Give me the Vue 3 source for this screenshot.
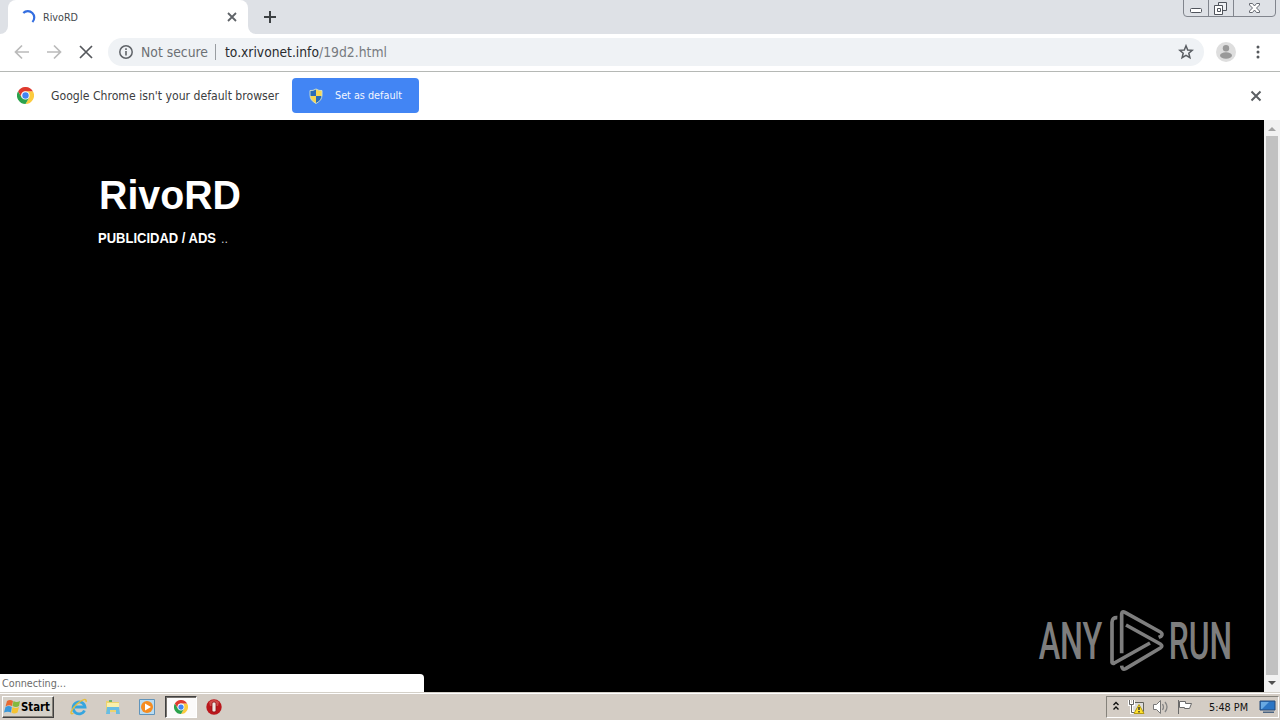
<script setup>
import { h } from 'vue'

// Single line of text fitted to an exact width
const Label = (p) =>
  h('svg', { width: p.w, height: 20, class: 'label', style: { display: 'block', overflow: 'visible', flex: 'none' } }, [
    h('text', {
      x: 0, y: 14, 'font-size': p.s || 11, fill: p.c || '#333', 'font-weight': p.b ? 700 : 400,
      'font-family': p.f || '"DejaVu Sans Condensed", "DejaVu Sans", sans-serif',
      textLength: p.w, lengthAdjust: 'spacingAndGlyphs'
    }, p.t)
  ])
Label.props = ['t', 'w', 's', 'c', 'b', 'f']

const Chrome = (p) =>
  h('svg', { width: p.size, height: p.size, viewBox: '0 0 24 24', style: { display: 'block', flex: 'none' } }, [
    h('path', { d: 'M12 12V6H22.4A12 12 0 0 1 12 24L17.2 15Z', fill: '#fccb3e' }),
    h('path', { d: 'M12 12 17.2 15 12 24A12 12 0 0 1 1.6 6L6.8 15Z', fill: '#2ba24c' }),
    h('path', { d: 'M1.6 6A12 12 0 0 1 22.4 6H12A6 6 0 0 0 6.8 15Z', fill: '#df3a2e' }),
    h('circle', { cx: 12, cy: 12, r: 5.8, fill: '#fff' }),
    h('circle', { cx: 12, cy: 12, r: 4.5, fill: '#4285f4' })
  ])
Chrome.props = ['size']
</script>

<template>
  <div class="screen">
    <header class="tabs">
      <div class="edge"></div>
      <div class="tab">
        <svg class="spinner" width="16" height="16" viewBox="0 0 16 16"><path d="M2.3 4.1A6 6 0 1 1 11.4 13.1" fill="none" stroke="#326de0" stroke-width="2.2"/></svg>
        <Label t="RivoRD" :w="35" :s="11" c="#45484c" />
        <svg class="tabclose" width="10" height="10" viewBox="0 0 10 10"><path d="M1 1 9 9M9 1 1 9" stroke="#5f6368" stroke-width="1.8"/></svg>
      </div>
      <div class="strip">
        <svg width="12" height="12" viewBox="0 0 12 12"><path d="M6 0V12M0 6H12" stroke="#3c4043" stroke-width="2"/></svg>
      </div>
      <svg class="wincontrols" width="97" height="18" viewBox="0 0 97 18" fill="none">
        <path d="M.5 0V13Q.5 16.5 4 16.5H89Q92.5 16.5 92.5 13V0M25.500 0V16M50.500 0V16" stroke="#81858d"/>
        <rect x="7.500" y="8.500" width="11" height="4" rx="1" fill="#fff" stroke="#50545c"/>
        <path d="M35.500 2.500H43.500V10.500H35.500Z" fill="#eef0f3" stroke="#50545c"/>
        <path d="M31.500 5.500H39.500V14.500H31.500ZM34.500 8.500H37.500V11.500H34.500Z" fill="#fff" stroke="#50545c"/>
        <path d="M66.500 3.500H69.500L71.500 6 73.500 3.500H76.500V5L73.500 8 76.500 11V12.500H73.500L71.500 10 69.500 12.500H66.500V11L69.500 8 66.500 5Z" fill="#fff" stroke="#656971"/>
      </svg>
    </header>

    <nav class="toolbar">
      <svg class="navicons" width="108" height="36" viewBox="0 0 108 36" fill="none" stroke-width="1.7">
        <path d="M29 18H16M22 11.500 15.500 18 22 24.500M47 18H60M54 11.500 60.500 18 54 24.500" stroke="#bababa"/>
        <path d="M80 12 92 24M92 12 80 24" stroke="#55585c"/>
      </svg>
      <div class="address">
        <svg width="14" height="14" viewBox="0 0 14 14" fill="none"><circle cx="7" cy="7" r="6.200" stroke="#5f6368" stroke-width="1.500"/><path d="M7 6V10.600M7 3.300V4.900" stroke="#5f6368" stroke-width="1.600"/></svg>
        <Label class="url secure" t="Not secure" :w="67" :s="14" c="#6c7074" />
        <i class="divider"></i>
        <Label class="url" t="to.xrivonet.info" :w="94" :s="14" c="#292b2e" />
        <Label class="url" t="/19d2.html" :w="68" :s="14" c="#777b80" />
        <svg class="star" width="16" height="16" viewBox="0 0 16 16"><path d="M8 1.800 9.700 6 14.200 6.300 10.800 9.200 11.900 13.700 8 11.300 4.100 13.700 5.200 9.200 1.800 6.300 6.300 6Z" fill="none" stroke="#5a5e63" stroke-width="1.500"/></svg>
      </div>
      <svg class="avatar" width="20" height="20" viewBox="0 0 20 20"><circle cx="10" cy="10" r="10" fill="#dedede"/><circle cx="10" cy="6.200" r="3.200" fill="#999"/><ellipse cx="10" cy="13.500" rx="6" ry="3.200" fill="#999"/></svg>
      <svg width="4" height="14" viewBox="0 0 4 14" fill="#55585c"><circle cx="2" cy="2" r="1.500"/><circle cx="2" cy="7" r="1.500"/><circle cx="2" cy="12" r="1.500"/></svg>
    </nav>

    <section class="infobar">
      <Chrome :size="17" />
      <Label class="question" t="Google Chrome isn't your default browser" :w="228" :s="12.5" c="#3c3d40" />
      <button class="default">
        <svg width="14" height="16" viewBox="0 0 14 16"><path d="M7 1Q10 3 13 2.500V7Q13 12.500 7 15.500 1 12.500 1 7V2.500Q4 3 7 1Z" fill="#2a6cb8"/><path d="M7 1V8H13V2.500Q10 3 7 1ZM7 8H1Q1.500 12.800 7 15.500Z" fill="#f5d654"/><path d="M7 1Q10 3 13 2.500V7Q13 12.500 7 15.500 1 12.500 1 7V2.500Q4 3 7 1Z" fill="none" stroke="#d6e4c9" stroke-width=".9"/></svg>
        <Label class="setlabel" t="Set as default" :w="67" :s="11" c="#f2f6ff" />
      </button>
      <svg class="dismiss" width="12" height="12" viewBox="0 0 12 12"><path d="M1.500 1.500 10.500 10.500M10.500 1.500 1.500 10.500" stroke="#5b5f63" stroke-width="2"/></svg>
    </section>

    <main class="viewport">
      <article class="page">
        <Label class="title" t="RivoRD" :w="142" :s="41" b="1" c="#fff" f="'Liberation Sans', sans-serif" />
        <div class="ads">
          <Label t="PUBLICIDAD / ADS" :w="118" :s="14" b="1" c="#fff" f="'Liberation Sans', sans-serif" />
          <Label t=".." :w="7" :s="13" c="#ccc" f="'Liberation Sans', sans-serif" />
        </div>
      </article>
      <aside class="scroll">
        <svg width="16" height="16" viewBox="0 0 16 16"><path d="M4 11 8 7 12 11Z" fill="#a3a3a3"/></svg>
        <div class="thumb"></div>
        <svg width="16" height="17" viewBox="0 0 16 17"><path d="M4 6 8 10 12 6Z" fill="#505050"/></svg>
      </aside>
      <svg class="watermark" width="230" height="80" viewBox="0 0 690 240">
        <g fill="#7e7e7e" font-family="Roboto, sans-serif" font-size="154" font-weight="500">
          <text x="26" y="178" textLength="191" lengthAdjust="spacingAndGlyphs">ANY</text>
          <text x="416" y="178" textLength="190" lengthAdjust="spacingAndGlyphs">RUN</text>
        </g>
        <g fill="none" stroke="#7e7e7e" stroke-width="11" stroke-linejoin="round">
          <path d="M262 53Q246 52 246 67V187Q247 192 253 189L360 129"/>
          <path d="M275 160V42Q276 32 285 37L391 96Q400 101 393 109L386 112"/>
          <path d="M288 75 391 132Q400 138 391 144L287 206Q276 211 275 197"/>
        </g>
      </svg>
      <div class="status"><Label t="Connecting..." :w="64" :s="11" c="#6c6c6c" /></div>
    </main>

    <footer class="taskbar">
      <button class="start">
        <svg width="17" height="16" viewBox="0 0 17 16"><path d="M3 2Q6 0 9 2L8 7Q5 5.500 1.500 7.500Z" fill="#e76a31"/><path d="M9.500 2Q12.500 4 16 2L15 7Q12 9 8.500 7Z" fill="#83b93e"/><path d="M1.500 8Q4.500 6 7.800 8L7 13.500Q4 12 0 13.500Z" fill="#3a98da"/><path d="M8.500 8Q11.500 10 15 8L13.500 13.500Q10 15.500 7.500 13.500Z" fill="#f5c332"/></svg>
        <Label t="Start" :w="29" :s="11.5" b="1" c="#000" />
      </button>
      <div class="launch">
        <svg width="18" height="18" viewBox="0 0 18 18" fill="none"><path d="M14.500 12.500A6 6 0 1 1 15 9H5" stroke="#35a5df" stroke-width="2.800"/><path d="M3.500 15C-1 18 1 11 7 6S17 0 16 4" stroke="#e5be3c" stroke-width="1.500"/></svg>
        <svg width="18" height="18" viewBox="0 0 18 18"><path d="M2 3H7L8 4H15V14H2Z" fill="#ecd36e"/><path d="M3 5H15V11H3Z" fill="#faf0ab"/><path d="M3 9H15L16 16H12V12H6V16H2Z" fill="#68bde3"/><path d="M5 3H8" stroke="#48a85d" stroke-width="1.500"/></svg>
        <svg width="18" height="18" viewBox="0 0 18 18"><path d="M1.500 1.500H16.500V16.500H1.500Z" fill="#b9dcf2" stroke="#6094bb"/><circle cx="9" cy="9" r="6" fill="#f58c20"/><path d="M7 5.500 13 9 7 12.500Z" fill="#fff"/></svg>
      </div>
      <div class="active"><Chrome :size="14" /></div>
      <svg class="opera" width="16" height="16" viewBox="0 0 16 16"><circle cx="8" cy="8" r="7.700" fill="#ba171c"/><path d="M3 3Q8-1 13 3L12 7H4Z" fill="#d04a48"/><rect x="6" y="3" width="4" height="10" rx="1.800" fill="#eee5df" stroke="#8c1014" stroke-width=".8"/></svg>
      <div class="tray">
        <svg class="chevrons" width="8" height="10" viewBox="0 0 8 10" fill="none"><path d="M1.500 4 4 1.500 6.500 4M1.500 8.500 4 6 6.500 8.500" stroke="#111" stroke-width="1.400"/></svg>
        <svg width="18" height="16" viewBox="0 0 18 16"><path d="M4.500 3.500H15.500V12.500H4.500Z" fill="#ddd" stroke="#62625b"/><path d="M1.500 1V5.500H5.500V1M3.500 5.500V13.500H9" fill="none" stroke="#fff" stroke-width="3"/><path d="M1.500 1V5.500H5.500V1M3.500 5.500V13.500H9" fill="none" stroke="#666" stroke-width="1"/><path d="M11 5.500 16 14.500H6Z" fill="#ffe12d" stroke="#b49a13"/><path d="M11 8V11M11 12V13.500" stroke="#333" stroke-width="1.500"/></svg>
        <svg width="18" height="16" viewBox="0 0 18 16"><path d="M1.500 5.500H4.500L8.500 1.500V14.500L4.500 10.500H1.500Z" fill="#fff" stroke="#777"/><path d="M10.500 5Q12.500 8 10.500 11M13 3Q17 8 13 13" fill="none" stroke="#858585" stroke-width="1.300"/></svg>
        <svg width="18" height="16" viewBox="0 0 18 16"><path d="M2.500 1V15M3.500 2.500H9.500V4.500H15.500L13.500 9.500H8.500V8.500H3.500Z" fill="#fff" stroke="#6a6a6a"/></svg>
        <Label class="clock" t="5:48 PM" :w="39" :s="11" c="#111" />
        <svg class="desktop" width="17" height="14" viewBox="0 0 17 14"><path d="M1 1H16V10H1Z" fill="#2c75c4" stroke="#264a78"/><path d="M2 2H10L3 9H2Z" fill="#69a9e2"/><path d="M4 11.500H15V13H4Z" fill="#4b6482"/></svg>
      </div>
    </footer>
  </div>
</template>

<style scoped>
.screen { width: 1280px; height: 720px; overflow: hidden; display: flex; flex-direction: column; background: #fff; }
button { border: 0; margin: 0; padding: 0; }
.tabs { position: relative; height: 34px; display: flex; background: linear-gradient(#dee1e6 20px, #fff 20px); flex: none; }
.edge { width: 8px; background: #dee1e6; border-radius: 0 0 8px 0; }
.tab { width: 240px; box-sizing: border-box; padding: 0 11px 1px 13px; display: flex; align-items: center; background: #fff; border-radius: 8px 8px 0 0; }
.spinner { margin-right: 6px; }
.tabclose { margin-left: auto; }
.strip { flex: 1; padding-left: 16px; display: flex; align-items: center; background: #dee1e6; border-radius: 0 0 0 8px; }
.wincontrols { position: absolute; right: 0; top: 0; }
.toolbar { height: 36px; padding-bottom: 1px; flex: none; display: flex; align-items: center; border-bottom: 1px solid #b5b8b5; }
.navicons { flex: none; }
.address { width: 1096px; height: 28px; border-radius: 14px; background: #eff2f5; box-sizing: border-box; padding: 0 10px 0 11px; display: flex; align-items: center; }
.url { margin-top: 2px; }
.secure { margin-left: 8px; }
.divider { width: 1px; height: 16px; background: #999da1; margin: 0 9px 0 7px; }
.star { margin-left: auto; }
.avatar { margin: 0 20px 0 12px; }
.infobar { height: 47px; padding: 0 18px 1px 17px; flex: none; display: flex; align-items: center; }
.question { margin-left: 17px; }
.default { width: 127px; height: 35px; margin-left: 13px; border-radius: 4px; background: #4285f4; display: flex; align-items: center; padding-left: 17px; gap: 12px; }
.setlabel { margin-bottom: 2px; }
.dismiss { margin-left: auto; }
.viewport { height: 572px; flex: none; background: #000; position: relative; display: flex; }
.page { flex: 1; padding: 75px 0 0 98px; }
.title { margin-left: 1px; }
.ads { display: flex; gap: 5px; margin-top: 14px; }
.scroll { width: 16px; background: #f1f1f1; display: flex; flex-direction: column; align-items: center; }
.scroll svg { display: block; flex: none; }
.thumb { width: 12px; flex: 1; background: #c1c1c1; }
.watermark { position: absolute; left: 1030px; top: 480px; overflow: visible; }
.status { position: absolute; left: 0; bottom: 0; width: 424px; height: 18px; background: #fff; border-top-right-radius: 4px; padding-left: 2px; box-sizing: border-box; display: flex; align-items: center; }
.taskbar { height: 28px; flex: none; box-sizing: border-box; border-top: 1px solid #d4d0c8; box-shadow: inset 0 1px #fff; background: #d4cdc5; display: flex; align-items: center; padding: 1px 1px 0 2px; }
.start { width: 52px; height: 22px; box-sizing: border-box; display: flex; align-items: center; padding-left: 1px; background: #d4d0c8; border: 1px solid; border-color: #fff #404040 #404040 #fff; box-shadow: inset -1px -1px #858078; }
.launch { display: flex; gap: 16px; margin-left: 16px; }
.active { width: 32px; height: 22px; box-sizing: border-box; margin-left: 9px; border: 1px solid; border-color: #404040 #fff #fff #404040; box-shadow: inset 1px 1px #77736e; background: #fbfafa; display: flex; align-items: center; justify-content: center; }
.opera { margin-left: 9px; }
.tray { margin-left: auto; width: 173px; height: 22px; box-sizing: border-box; border: 1px solid; border-color: #85827b #fff #fff #85827b; display: flex; align-items: center; gap: 6px; padding-left: 5px; }
.chevrons { margin-right: 2px; margin-bottom: 2px; }
.clock { margin-left: 9px; }
.desktop { margin-left: 5px; }
</style>

<style>
body { margin: 0; overflow: hidden; }
</style>
